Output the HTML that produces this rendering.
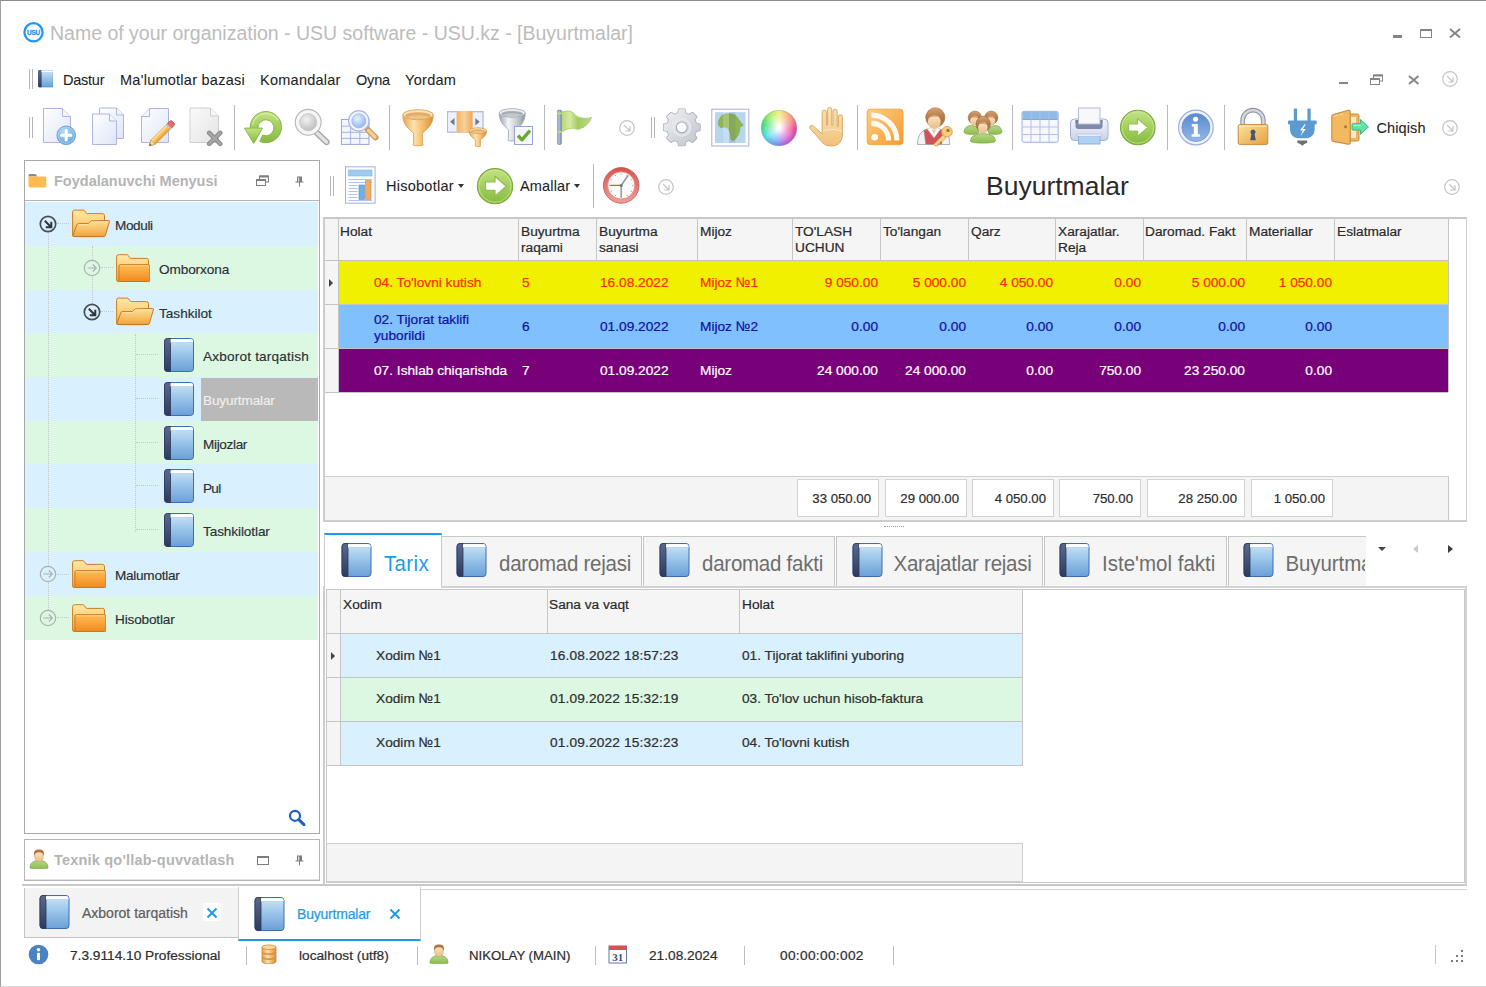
<!DOCTYPE html>
<html lang="uz">
<head>
<meta charset="utf-8">
<title>Buyurtmalar</title>
<style>
*{box-sizing:border-box;margin:0;padding:0}
html,body{width:1486px;height:987px;overflow:hidden;background:#fff}
body{position:relative;font-family:"Liberation Sans","DejaVu Sans",sans-serif;font-size:13px;color:#222}
.abs{position:absolute;left:0;top:0;width:1486px;height:987px}
.abs>*{position:absolute}
#win{position:absolute;left:0;top:0;width:1486px;height:987px;border-top:1px solid #8c8c8c;border-left:1px solid #a0a0a0;border-bottom:1px solid #d9d9d9}
.t{position:absolute;white-space:nowrap;line-height:1}
.g{-webkit-text-stroke:.22px currentColor}
.tr{-webkit-text-stroke:.16px currentColor}
.ui{-webkit-text-stroke:.08px currentColor}
.ui{font-size:14.5px;color:#1e1e1e}
.g{font-size:13.700px;color:#2e2e2e}
.h{line-height:16px;color:#2a2a2a}
.tab{font-size:20.500px;color:#6e6e6e;transform:scaleY(1.090);transform-origin:0 0}
.tr{font-size:13.600px;color:#2b2f36}
.vsep{position:absolute;width:1px;background:#b9b9b9}
.grip{position:absolute;width:4px;border-left:1px solid #b4b4b4;border-right:1px solid #b4b4b4}
</style>
</head>
<body>
<div id="win"></div>
<svg width="0" height="0" style="position:absolute">
<defs>
<!--GR-->
<linearGradient id="gPage" x1="0" y1="0" x2="1" y2="1"><stop offset="0" stop-color="#ffffff"/><stop offset="1" stop-color="#dfe5f6"/></linearGradient>
<linearGradient id="gPageG" x1="0" y1="0" x2="1" y2="1"><stop offset="0" stop-color="#fafafa"/><stop offset="1" stop-color="#e4e4e4"/></linearGradient>
<radialGradient id="gPlus" cx=".4" cy=".3" r=".8"><stop offset="0" stop-color="#b9dcf5"/><stop offset="1" stop-color="#5c9bd6"/></radialGradient>
<linearGradient id="gGreen" x1="0" y1="0" x2="0" y2="1"><stop offset="0" stop-color="#c3e286"/><stop offset=".5" stop-color="#a3cf5e"/><stop offset="1" stop-color="#86ba40"/></linearGradient>
<radialGradient id="gGlass" cx=".4" cy=".35" r=".7"><stop offset="0" stop-color="#f2f2f2"/><stop offset="1" stop-color="#bcbcbc"/></radialGradient>
<radialGradient id="gGlassB" cx=".4" cy=".35" r=".7"><stop offset="0" stop-color="#e8f1ff"/><stop offset="1" stop-color="#8fb5ee"/></radialGradient>
<linearGradient id="gGold" x1="0" y1="0" x2="1" y2="0"><stop offset="0" stop-color="#eaa24a"/><stop offset=".35" stop-color="#fde3ae"/><stop offset=".7" stop-color="#f2b763"/><stop offset="1" stop-color="#d98d3a"/></linearGradient>
<linearGradient id="gSilver" x1="0" y1="0" x2="1" y2="0"><stop offset="0" stop-color="#9aa1ab"/><stop offset=".35" stop-color="#f4f6f8"/><stop offset=".7" stop-color="#c5cad1"/><stop offset="1" stop-color="#8d949e"/></linearGradient>
<linearGradient id="gGear" x1="0" y1="0" x2="1" y2="1"><stop offset="0" stop-color="#f1f2f5"/><stop offset="1" stop-color="#bfc3cc"/></linearGradient>
<linearGradient id="gRss" x1="0" y1="0" x2="1" y2="1"><stop offset="0" stop-color="#fdcf86"/><stop offset="1" stop-color="#f59a2c"/></linearGradient>
<linearGradient id="gLock" x1="0" y1="0" x2="1" y2="1"><stop offset="0" stop-color="#fbe29a"/><stop offset="1" stop-color="#e5a244"/></linearGradient>
<linearGradient id="gInfo" x1="0" y1="0" x2="0" y2="1"><stop offset="0" stop-color="#5a89cf"/><stop offset="1" stop-color="#93b8e8"/></linearGradient>
<linearGradient id="gPrn" x1="0" y1="0" x2="0" y2="1"><stop offset="0" stop-color="#f4f6fb"/><stop offset="1" stop-color="#c9d2e8"/></linearGradient>
<linearGradient id="gHair" x1="0" y1="0" x2="0" y2="1"><stop offset="0" stop-color="#d7a273"/><stop offset=".45" stop-color="#b67c4c"/><stop offset="1" stop-color="#a56a3c"/></linearGradient>
<linearGradient id="gSkin" x1="0" y1="0" x2="0" y2="1"><stop offset="0" stop-color="#fbe6c8"/><stop offset="1" stop-color="#e9bd88"/></linearGradient>
<linearGradient id="gHand" x1="0" y1="0" x2="0" y2="1"><stop offset="0" stop-color="#fbe3b4"/><stop offset="1" stop-color="#f0c27c"/></linearGradient>
<linearGradient id="gBodyG" x1="0" y1="0" x2="0" y2="1"><stop offset="0" stop-color="#b6d983"/><stop offset="1" stop-color="#8cbc52"/></linearGradient>
<linearGradient id="gFlag" x1="0" y1="0" x2="1" y2="0"><stop offset="0" stop-color="#b4d873"/><stop offset=".28" stop-color="#d4eaa4"/><stop offset=".55" stop-color="#a2cb62"/><stop offset="1" stop-color="#bcdc86"/></linearGradient>
<linearGradient id="gCol" x1="0" y1="0" x2="1" y2="0"><stop offset="0" stop-color="#f2b463"/><stop offset=".5" stop-color="#f8d19a"/><stop offset="1" stop-color="#f0a850"/></linearGradient>
<!--/GR-->
  <linearGradient id="gBook" x1="0" y1="0" x2="0" y2="1"><stop offset="0" stop-color="#cfe6f7"/><stop offset=".45" stop-color="#9cc6ea"/><stop offset="1" stop-color="#6a9fd6"/></linearGradient>
  <linearGradient id="gSpine" x1="0" y1="0" x2="0" y2="1"><stop offset="0" stop-color="#5b6a8c"/><stop offset="1" stop-color="#2c3a5e"/></linearGradient>
  <linearGradient id="gFold" x1="0" y1="0" x2="0" y2="1"><stop offset="0" stop-color="#fdbb56"/><stop offset=".5" stop-color="#f9a43a"/><stop offset="1" stop-color="#f08a1c"/></linearGradient>
  <linearGradient id="gFoldBack" x1="0" y1="0" x2="0" y2="1"><stop offset="0" stop-color="#ffeaa8"/><stop offset=".5" stop-color="#fbcf78"/><stop offset="1" stop-color="#f3a640"/></linearGradient>
  <linearGradient id="gFoldO" x1="0" y1="0" x2="0" y2="1"><stop offset="0" stop-color="#fde09a"/><stop offset=".5" stop-color="#f8c46a"/><stop offset="1" stop-color="#efa440"/></linearGradient>
  <symbol id="book" viewBox="0 0 30 34">
    <rect x=".5" y=".5" width="29" height="33" rx="3" fill="url(#gBook)" stroke="#3f6db3"/>
    <path d="M3.5 .5h3v33h-3a3 3 0 0 1-3-3v-27a3 3 0 0 1 3-3z" fill="url(#gSpine)" stroke="#2b375a" stroke-width=".8"/>
    <path d="M6.5 1.2h20.5a2 2 0 0 1 2 2v.8h-22.5z" fill="#fff"/>
    <rect x="6.5" y="4" width="22.5" height="1" fill="#b9d6ee" opacity=".8"/>
  </symbol>
  <symbol id="fclosed" viewBox="0 0 34 28">
    <path d="M.6 2.700a2 2 0 0 1 2-2h8.200a2 2 0 0 1 1.600.9l1.400 2.100a1.500 1.500 0 0 0 1.200.7h15.500a2 2 0 0 1 2 2v19.600a1.500 1.500 0 0 1-1.500 1.500h-28.900a1.500 1.500 0 0 1-1.500-1.500z" fill="url(#gFoldBack)" stroke="#cf7d22" stroke-width="1"/>
    <path d="M2.900 12.200a1.500 1.500 0 0 1 1.500-1.500h28a1.500 1.500 0 0 1 1.500 1.500v13.900a1.500 1.500 0 0 1-1.500 1.500h-28a1.500 1.500 0 0 1-1.500-1.500z" fill="url(#gFold)" stroke="#cf7518" stroke-width="1"/>
    <path d="M4.200 11.800h28.400" stroke="#ffd58a" stroke-width="1"/>
  </symbol>
  <symbol id="fopen" viewBox="0 0 38 29">
    <path d="M.6 3.100a2 2 0 0 1 2-2h8.600a2 2 0 0 1 1.600.9l1.300 1.900a1.500 1.500 0 0 0 1.200.7h15.200a2 2 0 0 1 2 2v19.500a1.500 1.500 0 0 1-1.500 1.500h-28.900a1.500 1.500 0 0 1-1.500-1.500z" fill="url(#gFoldBack)" stroke="#cf7d22" stroke-width="1"/>
    <path d="M4.900 15.700a1.500 1.500 0 0 1 1.400-1.100h9.600a1.500 1.500 0 0 0 1-.4l1.900-1.900a1.500 1.500 0 0 1 1-.4l16.600-.5a1 1 0 0 1 1 1.300l-4 13.700a1.500 1.500 0 0 1-1.400 1.100h-30a1 1 0 0 1-1-1.300z" fill="url(#gFoldO)" stroke="#c97822" stroke-width="1"/>
    <path d="M6.500 15.700h9.800l2.600-2.500 16.500-.5" fill="none" stroke="#ffe7ae" stroke-width=".9"/>
  </symbol>
  <symbol id="cexp" viewBox="0 0 18 18">
    <circle cx="9" cy="9" r="7.700" stroke="#474e54" stroke-width="1.700"/>
    <path d="M5.800 5.800l5.700 5.700M12.300 6.800v5.500h-5.500" fill="none" stroke="#30373c" stroke-width="2"/>
  </symbol>
  <symbol id="ccol" viewBox="0 0 18 18">
    <circle cx="9" cy="9" r="7.700" stroke="#a9b2b0" stroke-width="1.200"/>
    <path d="M4.500 9h8.500M9.800 5.500l3.500 3.500-3.500 3.500" fill="none" stroke="#a9b2b0" stroke-width="1.200"/>
  </symbol>
</defs>
</svg>


<!-- TITLE BAR -->
<div id="title" class="abs">
<svg style="left:22px;top:21px" width="23" height="23" viewBox="0 0 23 23"><circle cx="11.500" cy="11.300" r="9.100" fill="#fff" stroke="#2196f3" stroke-width="2.300"/><text x="11.500" y="14" text-anchor="middle" font-family="Liberation Sans,DejaVu Sans,sans-serif" font-size="6.400" font-weight="bold" fill="#2196f3" stroke="#2196f3" stroke-width=".3" letter-spacing="-.1">USU</text></svg>
<span class="t" style="left:50px;top:24px;font-size:19.500px;color:#bcbcbc">Name of your organization - USU software - USU.kz - [Buyurtmalar]</span>
<div style="left:1393px;top:35px;width:9px;height:2.500px;background:#848484"></div>
<div style="left:1420px;top:29px;width:12px;height:9px;border:1px solid #848484;border-top-width:2px"></div>
<svg style="left:1449px;top:28px" width="12" height="10"><path d="M1 1l10 8.500M11 1l-10 8.500" stroke="#848484" stroke-width="1.900" fill="none"/></svg>
</div>

<!-- MENU BAR -->
<div id="menu" class="abs">
<span class="grip" style="left:29px;top:69px;height:20px"></span>
<svg style="left:37.500px;top:70px" width="15.500" height="17.500" viewBox="0 0 30 34" preserveAspectRatio="none"><use href="#book"/></svg>
<span class="t ui" style="left:63px;top:73px;letter-spacing:-0.25px">Dastur</span>
<span class="t ui" style="left:120px;top:73px;letter-spacing:0.25px">Ma'lumotlar bazasi</span>
<span class="t ui" style="left:260px;top:73px;letter-spacing:0.25px">Komandalar</span>
<span class="t ui" style="left:356px;top:73px;letter-spacing:-0.2px">Oyna</span>
<span class="t ui" style="left:405px;top:73px;letter-spacing:0.3px">Yordam</span>
<div style="left:1339px;top:81.500px;width:9px;height:2.500px;background:#848484"></div>
<svg style="left:1370px;top:74px" width="13" height="11"><rect x="3.500" y="1" width="9" height="6" fill="none" stroke="#848484"/><rect x="3.500" y=".5" width="9" height="2" fill="#848484"/><rect x=".5" y="4.500" width="9" height="6" fill="#fff" stroke="#848484"/><rect x=".5" y="4" width="9" height="2" fill="#848484"/></svg>
<svg style="left:1408px;top:75px" width="12" height="10"><path d="M1 1l9.500 8M10.500 1l-9.500 8" stroke="#848484" stroke-width="1.900" fill="none"/></svg>
<svg style="left:1441px;top:70px" width="18" height="18"><circle cx="9" cy="9" r="7.300" fill="#fff" stroke="#c4c4c4" stroke-width="1.200"/><path d="M6.200 6.200l5.300 5.300M12 7.300v4.700h-4.700" fill="none" stroke="#c4c4c4" stroke-width="1.200"/></svg>
</div>

<!-- TOOLBAR -->
<div id="toolbar" class="abs">
<span class="grip" style="left:29px;top:117px;height:21px"></span>
<svg style="left:39px;top:107px" width="40" height="40" viewBox="0 0 40 40"><path d="M4.5 1.5H23.5L31.5 9.5V35.5H4.5Z" fill="url(#gPage)" stroke="#adb4df"/><path d="M23.5 1.5V9.5H31.5" fill="#f4f6fc" stroke="#adb4df"/><circle cx="27.200" cy="28.300" r="9.300" fill="url(#gPlus)" stroke="#6aa3d9"/><circle cx="27.200" cy="28.300" r="8" fill="none" stroke="#b5d8f3" stroke-width="1" opacity=".7"/><path d="M27.200 23.600v9.400M22.500 28.300h9.400" stroke="#fff" stroke-width="3" stroke-linecap="round"/></svg>
<svg style="left:88px;top:107px" width="40" height="40" viewBox="0 0 40 40"><path d="M11.5 1H28.5L35.5 8V31.5H11.5Z" fill="url(#gPage)" stroke="#adb4df"/><path d="M28.5 1V8H35.5" fill="#f4f6fc" stroke="#adb4df"/><path d="M4.5 7H21.5L28.5 14V37.5H4.5Z" fill="url(#gPage)" stroke="#adb4df"/><path d="M21.5 7V14H28.5" fill="#f4f6fc" stroke="#adb4df"/></svg>
<svg style="left:138px;top:107px" width="40" height="40" viewBox="0 0 40 40"><path d="M11.5 1.5H30.5V35.5H3.5V9.5Z" fill="url(#gPage)" stroke="#adb4df"/><path d="M11.5 1.5V9.5H3.5" fill="#f4f6fc" stroke="#adb4df"/><g transform="translate(11.400 38.800) rotate(-45)"><path d="M0 0l5-3h26.500a2 2 0 0 1 2 2v2a2 2 0 0 1-2 2h-26.500z" fill="#f7c35c" stroke="#c98c36" stroke-width=".8"/><path d="M5-3h22v2h-22z" fill="#fbdc94"/><path d="M5 1h22v2h-22z" fill="#e9a443"/><path d="M28-3h3.500a2 2 0 0 1 2 2v2a2 2 0 0 1-2 2h-3.500z" fill="#e56e70" stroke="#c4484c" stroke-width=".6"/><path d="M26-3h2.200v6h-2.200z" fill="#b9c3d6"/><path d="M0 0l5-3v6z" fill="#f3dcb8" stroke="#c98c36" stroke-width=".5"/><path d="M0 0l2-1.200v2.400z" fill="#555"/></g></svg>
<svg style="left:187px;top:107px" width="40" height="40" viewBox="0 0 40 40"><path d="M3 1H23.5L31.5 9V35.5H3Z" fill="url(#gPageG)" stroke="#cfcfcf"/><path d="M23.5 1V9H31.5" fill="#f4f6fc" stroke="#cfcfcf"/><path d="M22.200 25.900l11 11M33.200 25.900l-11 11" stroke="#8e8e8e" stroke-width="4.600" stroke-linecap="round"/><path d="M22.200 25.900l11 11M33.200 25.900l-11 11" stroke="#a6a6a6" stroke-width="2.200" stroke-linecap="round"/></svg>
<svg style="left:242.6px;top:107px" width="40" height="40" viewBox="0 0 40 40"><path d="M7.300 21.100A15.600 15.600 0 1 1 16.800 34.450L19.700 28.100A8 8 0 1 0 14.900 21.100Z" fill="url(#gGreen)" stroke="#7db040" stroke-width=".9" stroke-linejoin="round"/><path d="M9.500 18A14 14 0 0 1 35 13" fill="none" stroke="#d9efb0" stroke-width="1.400" opacity=".8"/><path d="M1.500 21.100L19.500 21.100L10.700 36.400Z" fill="url(#gGreen)" stroke="#7db040" stroke-width=".9" stroke-linejoin="round"/><path d="M7.800 20.600h6.600v1.200h-6.600z" fill="#a9d365"/></svg>
<svg style="left:291.5px;top:107px" width="40" height="40" viewBox="0 0 40 40"><path d="M25 26l9.500 9" stroke="#a3a3a3" stroke-width="6.200" stroke-linecap="round"/><path d="M25 26l9.500 9" stroke="#e2e2e2" stroke-width="3.600" stroke-linecap="round"/><circle cx="16.200" cy="15.200" r="12.900" fill="#f6f6f6" stroke="#b9b9b9" stroke-width="1.200"/><circle cx="16.200" cy="15.200" r="8.600" fill="url(#gGlass)" stroke="#c6c6c6" stroke-width=".8"/></svg>
<svg style="left:340px;top:107px" width="40" height="40" viewBox="0 0 40 40"><rect x="1.500" y="12.500" width="27.500" height="24.900" fill="#f4f6fd" stroke="#98a4da"/><path d="M1.500 19.2h27.500" stroke="#a9b3e0" stroke-width="1"/><path d="M1.500 25.3h27.500" stroke="#a9b3e0" stroke-width="1"/><path d="M1.500 31.4h27.500" stroke="#a9b3e0" stroke-width="1"/><path d="M10.6 12.500v24.900" stroke="#a9b3e0" stroke-width="1"/><path d="M19.8 12.500v24.900" stroke="#a9b3e0" stroke-width="1"/><path d="M28 23l7.500 7.500" stroke="#d29a55" stroke-width="6" stroke-linecap="round"/><path d="M28.500 23.500l6.500 6.500" stroke="#f6cf98" stroke-width="3.200" stroke-linecap="round"/><circle cx="18.800" cy="13.900" r="10.200" fill="#f0f3fc" stroke="#a9b5e6" stroke-width="1.200"/><circle cx="18.800" cy="13.900" r="7" fill="url(#gGlassB)" stroke="#9db4ea" stroke-width=".8"/></svg>
<svg style="left:397.6px;top:107px" width="40" height="40" viewBox="0 0 40 40"><path d="M4.80 7.72C4.80 19.23 12.35 22.64 15.59 26.28V36.28l-0.81 1.22a5.22 1.32 0 0 0 10.44 0l-0.81 -1.22V26.28C27.65 22.64 35.20 19.23 35.20 7.72Z" fill="url(#gGold)" stroke="#d9994a" stroke-width=".8"/><ellipse cx="20" cy="7.72" rx="15.20" ry="5.02" fill="#fbe3b6" stroke="#d9994a" stroke-width=".8"/><ellipse cx="20" cy="8.63" rx="12.77" ry="3.31" fill="#d99a52" opacity=".75"/><ellipse cx="20" cy="9.95" rx="10.03" ry="1.81" fill="#f3c98a" opacity=".8"/></svg>
<svg style="left:446.7px;top:107px" width="40" height="40" viewBox="0 0 40 40"><rect x=".4" y="4.700" width="35.600" height="20.400" fill="#eef1fa" stroke="#b0b8e4" stroke-width="1.300"/><rect x="9.600" y="4.100" width="16" height="21.600" fill="url(#gCol)"/><path d="M7.500 11v7.400l-4.400-3.700z" fill="#6f7b8f"/><path d="M28.300 11v7.400l4.400-3.700z" fill="#6f7b8f"/><path d="M22.30 23.64C22.30 29.44 26.57 30.93 28.41 32.99V38.08l-0.46 0.69a2.95 0.75 0 0 0 5.91 0l-0.46 -0.69V32.99C35.23 30.93 39.50 29.44 39.50 23.64Z" fill="url(#gGold)" stroke="#d9994a" stroke-width=".8"/><ellipse cx="30.9" cy="23.64" rx="8.60" ry="2.84" fill="#fbe3b6" stroke="#d9994a" stroke-width=".8"/><ellipse cx="30.9" cy="24.15" rx="7.22" ry="1.87" fill="#d99a52" opacity=".75"/><ellipse cx="30.9" cy="24.90" rx="5.68" ry="1.02" fill="#f3c98a" opacity=".8"/></svg>
<svg style="left:496px;top:107px" width="40" height="40" viewBox="0 0 40 40"><path d="M3.20 5.99C3.20 16.42 9.66 19.68 12.43 22.80V31.81l-0.69 1.04a4.46 1.13 0 0 0 8.93 0l-0.69 -1.04V22.80C22.74 19.68 29.20 16.42 29.20 5.99Z" fill="url(#gSilver)" stroke="#9aa1ad" stroke-width=".8"/><ellipse cx="16.2" cy="5.99" rx="13.00" ry="4.29" fill="#eef0f3" stroke="#9aa1ad" stroke-width=".8"/><ellipse cx="16.2" cy="6.77" rx="10.92" ry="2.83" fill="#8d95a1" opacity=".75"/><ellipse cx="16.2" cy="7.90" rx="8.58" ry="1.54" fill="#c9ced6" opacity=".8"/><rect x="18.500" y="19.500" width="18" height="18" fill="#f3f5fc" stroke="#98a4d8"/><rect x="20" y="21" width="15" height="15" fill="none" stroke="#fff"/><path d="M22 28.500l4 4.300l8-9.300" fill="none" stroke="#6aa82e" stroke-width="3.400" stroke-linejoin="round"/></svg>
<svg style="left:555px;top:107px" width="40" height="40" viewBox="0 0 40 40"><path d="M6.400 5C10 4 13 3.800 15.400 4.300C19 5.200 20 8.500 22.200 9.600C25 11.200 31 12 36.600 10.400C35.500 13 34.500 14.800 32.900 16.500C31 18.800 28.500 20.800 26.100 21.300C24.500 22 23.500 22.500 22.200 22.300C20.500 22 19.800 21.300 18.300 21.300C16 21.200 14 21.600 12 22.300C10 23 8 24 6.400 25Z" fill="url(#gFlag)" stroke="#9cc760" stroke-width=".7"/><rect x="2.600" y="3.100" width="3.800" height="34.300" rx=".8" fill="#8a9ec6" stroke="#6f82aa" stroke-width=".6"/><rect x="3.500" y="3.600" width="1.100" height="33.300" fill="#bccae6"/><rect x="2.300" y="5.400" width="4.400" height="1.900" fill="#c3de6e"/><rect x="2.300" y="23.900" width="4.400" height="1.900" fill="#c3de6e"/></svg>
<svg style="left:661.5px;top:107px" width="40" height="40" viewBox="0 0 40 40"><path d="M16.98 2.62L22.62 2.62L23.21 6.20L27.43 7.95L30.38 5.84L34.36 9.82L32.25 12.77L34.00 16.99L37.58 17.58L37.58 23.22L34.00 23.81L32.25 28.03L34.36 30.98L30.38 34.96L27.43 32.85L23.21 34.60L22.62 38.18L16.98 38.18L16.39 34.60L12.17 32.85L9.22 34.96L5.24 30.98L7.35 28.03L5.60 23.81L2.02 23.22L2.02 17.58L5.60 16.99L7.35 12.77L5.24 9.82L9.22 5.84L12.17 7.95L16.39 6.20Z" fill="url(#gGear)" stroke="#a7acb8" stroke-width="2.200" stroke-linejoin="round"/><path d="M16.98 2.62L22.62 2.62L23.21 6.20L27.43 7.95L30.38 5.84L34.36 9.82L32.25 12.77L34.00 16.99L37.58 17.58L37.58 23.22L34.00 23.81L32.25 28.03L34.36 30.98L30.38 34.96L27.43 32.85L23.21 34.60L22.62 38.18L16.98 38.18L16.39 34.60L12.17 32.85L9.22 34.96L5.24 30.98L7.35 28.03L5.60 23.81L2.02 23.22L2.02 17.58L5.60 16.99L7.35 12.77L5.24 9.82L9.22 5.84L12.17 7.95L16.39 6.20Z" fill="url(#gGear)" stroke="url(#gGear)" stroke-width=".8" stroke-linejoin="round"/><circle cx="19.8" cy="20.4" r="8.4" fill="none" stroke="#e6e8ed" stroke-width="2"/><circle cx="19.8" cy="20.4" r="5.4" fill="#fff" stroke="#a7acb8" stroke-width="1.100"/></svg>
<svg style="left:710px;top:107px" width="40" height="40" viewBox="0 0 40 40"><rect x="1.800" y="2.200" width="37" height="36.800" fill="#fff" stroke="#a5acdb"/><rect x="5" y="5.200" width="30.500" height="30.800" fill="#b7d5ef"/><path d="M9.600 11.800C11 9 13 7.500 15 7.100C18 6.500 22 7 24.400 7.800C26 8.500 27 10 27.800 11.200L31.100 15.900L33.200 17.900C32.500 19.200 31 19.800 29.800 19.900C30 22 29.600 24 29.100 25.300C28.500 27.500 27.500 29.500 26.400 30.700C25.500 32.200 24.300 33.200 23.100 33.400C22 33.300 21.300 32.700 21 32C20.600 30 20.600 28.500 20.400 26.600C20 24.800 19.300 23.200 18.400 21.900C17.500 20.800 16.300 20.100 15 19.900C13.500 20 12 20.500 10.900 20.600C9.700 19.800 8.800 18.500 8.300 17.200C8.300 15 8.800 13.200 9.600 11.800Z" fill="#8fb450" stroke="#7fa446" stroke-width=".6"/><rect x="13" y="5.200" width="6" height="30.800" fill="#fff" opacity=".22"/><rect x="19" y="5.200" width="6.500" height="30.800" fill="#4f6f98" opacity=".16"/></svg>
<div style="left:761.0px;top:110px;width:35.600px;height:35.600px;border-radius:50%;background:radial-gradient(circle at 50% 50%,#fff 0,rgba(255,255,255,.9) 10%,rgba(255,255,255,.55) 30%,rgba(255,255,255,0) 66%),conic-gradient(from 0deg,#f4ee7a,#f9a878 40deg,#ee3f8e 95deg,#c85ae0 150deg,#6f9ff4 190deg,#4fe0ec 235deg,#45dd70 285deg,#aef06a 330deg,#f4ee7a);box-shadow:inset 0 0 0 1px rgba(160,160,190,.35), inset 0 -2px 4px rgba(90,90,140,.18)"></div>
<svg style="left:806px;top:107px" width="40" height="40" viewBox="0 0 40 40"><path d="M16.200 21V5.200a2.100 2.100 0 0 1 4.200 0V18h1.200V2.600a2.100 2.100 0 0 1 4.200 0V18h1.200V4.300a2.100 2.100 0 0 1 4.200 0V19h1.200V9.800a2 2 0 0 1 4 0V27c0 7-3.500 12-11 12c-6 0-9-2.500-12-7L4 21.500c-1.300-2 1.200-4.200 3.200-2.600l9 8z" fill="url(#gHand)" stroke="#d6a45c" stroke-width=".9" stroke-linejoin="round"/><path d="M17 24c4-2 12-2 19 0" fill="none" stroke="#fff3d8" stroke-width="1.200" opacity=".7"/></svg>
<svg style="left:864.6px;top:107px" width="40" height="40" viewBox="0 0 40 40"><rect x="2.200" y="2.200" width="35.800" height="35.400" rx="3" fill="url(#gRss)" stroke="#f3a545"/><circle cx="9.700" cy="30.200" r="3.300" fill="#fff"/><path d="M6.500 19a14 14 0 0 1 14.500 14.500h5.200A19.500 19.500 0 0 0 6.500 13.800z" fill="#fff" opacity=".95"/><path d="M6.500 9.500a24 24 0 0 1 24.500 24h-4A20.500 20.500 0 0 0 6.500 13z" fill="#fbd9a6" opacity=".0"/><path d="M6.500 5.500a28 28 0 0 1 28 28h-5.200A22.800 22.800 0 0 0 6.500 10.700z" fill="#fff" opacity=".92"/></svg>
<svg style="left:915px;top:107px" width="40" height="40" viewBox="0 0 40 40"><path d="M2.700 37.500c0-9 3.500-13.500 9.500-15.500h13c6 2 9.500 6.500 9.500 15.500z" fill="#cc545a" stroke="#9a9a9a" stroke-width=".8"/><path d="M2.700 37.500c0-7 2.200-11.500 6.200-13.800l1.800 13.800zM34.700 37.500c0-7-2.200-11.500-6.200-13.800l-1.800 13.800z" fill="#f4f4f4" stroke="#a2a2a2" stroke-width=".5"/><path d="M12.500 22.300l6.500 8.500 6.500-8.500-3-1.500h-7z" fill="#fff" stroke="#c4c4c4" stroke-width=".4"/><path d="M16.500 22.500l2.500 4 2.500-4z" fill="#e9c9a0"/><ellipse cx="20.300" cy="10.500" rx="9.600" ry="9.800" fill="url(#gHair)" stroke="#9a6238" stroke-width=".5"/><ellipse cx="19.300" cy="14.900" rx="6.400" ry="7.200" fill="url(#gSkin)"/><path d="M13 11.500C15 6.500 21 6 26.500 11C23 9 17 9 13 11.500Z" fill="#c89060" opacity=".9"/><g><circle cx="32" cy="24.700" r="5.300" fill="#f7cd80" stroke="#d9a04e" stroke-width=".9"/><circle cx="33" cy="23.400" r="1.700" fill="#a8703e"/><path d="M28.400 27.800l-9.800 9.600 1.300 1.500h2.900v-2.200h2.200v-2.200h2.300l3.400-3.400z" fill="#f7cd80" stroke="#d9a04e" stroke-width=".8"/><path d="M20.500 38l8.300-8.300" stroke="#fdebb8" stroke-width="1" opacity=".8"/></g></svg>
<svg style="left:962.7px;top:107px" width="40" height="40" viewBox="0 0 40 40"><path d="M1.10 25.30C1.10 21.21 3.76 18.60 8.50 18.60S15.90 21.21 15.90 25.30C15.90 28.10 1.10 28.10 1.10 25.30Z" fill="url(#gBodyG)" stroke="#78a444" stroke-width=".7"/><ellipse cx="11.90" cy="10.72" rx="6.70" ry="6.62" fill="url(#gHair)" stroke="#9a6238" stroke-width=".5"/><ellipse cx="11.56" cy="13.75" rx="4.42" ry="4.90" fill="url(#gSkin)"/><path d="M7.08 11.66C8.55 8.06 12.57 7.70 16.05 12.02C13.91 10.22 9.89 9.86 7.08 11.66Z" fill="#c89060" opacity=".9"/><path d="M25.30 25.30C25.30 21.21 27.73 18.60 32.05 18.60S38.80 21.21 38.80 25.30C38.80 28.10 25.30 28.10 25.30 25.30Z" fill="url(#gBodyG)" stroke="#78a444" stroke-width=".7"/><ellipse cx="28.20" cy="10.72" rx="6.70" ry="6.62" fill="url(#gHair)" stroke="#9a6238" stroke-width=".5"/><ellipse cx="27.86" cy="13.75" rx="4.42" ry="4.90" fill="url(#gSkin)"/><path d="M23.38 11.66C24.85 8.06 28.87 7.70 32.35 12.02C30.21 10.22 26.19 9.86 23.38 11.66Z" fill="#c89060" opacity=".9"/><path d="M7.50 34.00C7.50 29.42 11.98 26.60 19.95 26.60S32.40 29.42 32.40 34.00C32.40 36.80 7.50 36.80 7.50 34.00Z" fill="url(#gBodyG)" stroke="#78a444" stroke-width=".7"/><ellipse cx="20.20" cy="17.10" rx="7.20" ry="8.00" fill="url(#gHair)" stroke="#9a6238" stroke-width=".5"/><ellipse cx="19.84" cy="20.76" rx="4.75" ry="5.92" fill="url(#gSkin)"/><path d="M15.02 18.23C16.60 13.89 20.92 13.45 24.66 18.67C22.36 16.50 18.04 16.06 15.02 18.23Z" fill="#c89060" opacity=".9"/></svg>
<svg style="left:1019.6px;top:107px" width="40" height="40" viewBox="0 0 40 40"><rect x="2" y="4.300" width="36.200" height="31" rx="2" fill="#f6f8fd" stroke="#9fb0e0"/><path d="M2.500 6.300a1.500 1.500 0 0 1 1.500-1.500h32.200a1.500 1.500 0 0 1 1.500 1.500v6.200h-35.200z" fill="#8fbbe8"/><path d="M2.500 20h35" stroke="#b3c0e6" stroke-width="1"/><path d="M2.500 27.5h35" stroke="#b3c0e6" stroke-width="1"/><path d="M11 4.800v30" stroke="#b3c0e6" stroke-width="1"/><path d="M20 4.800v30" stroke="#b3c0e6" stroke-width="1"/><path d="M29 4.800v30" stroke="#b3c0e6" stroke-width="1"/><path d="M2.500 12.500h35.200" stroke="#86a6dc" stroke-width="1"/></svg>
<svg style="left:1069px;top:107px" width="40" height="40" viewBox="0 0 40 40"><rect x="1.500" y="12" width="37.500" height="21.500" rx="4" fill="url(#gPrn)" stroke="#a3aed4"/><path d="M6.500 13h27v6a3 3 0 0 1-3 3h-21a3 3 0 0 1-3-3z" fill="#7f89a8"/><path d="M6.500 13h27v3h-27z" fill="#6a7596" opacity=".6"/><rect x="9.500" y="1" width="21.500" height="16" fill="#f7f8fc" stroke="#b5bcd8"/><rect x="9.500" y="28.500" width="21.500" height="8.500" fill="#aed3f2" stroke="#8fb0dc"/><rect x="8" y="27" width="24.500" height="2.200" fill="#e9edf7" stroke="#a9b3d6" stroke-width=".5"/></svg>
<svg style="left:1118px;top:107px" width="40" height="40" viewBox="0 0 40 40"><circle cx="19.800" cy="20.500" r="17.300" fill="url(#gGreen)" stroke="#7aa93a" stroke-width="1.100"/><circle cx="19.800" cy="20.500" r="15.800" fill="none" stroke="#cfe89a" stroke-width="1" opacity=".7"/><path d="M10.500 16.800h9v-5.200l10.500 8.900l-10.500 8.900v-5.200h-9z" fill="#fff" stroke="#95c455" stroke-width="1.300" stroke-linejoin="round"/></svg>
<svg style="left:1175.5px;top:107px" width="40" height="40" viewBox="0 0 40 40"><circle cx="19.900" cy="20.500" r="17.300" fill="#eef2fb" stroke="#9db1de" stroke-width="1.200"/><circle cx="19.900" cy="20.500" r="14" fill="url(#gInfo)" stroke="#6d92cf" stroke-width=".8"/><circle cx="19.600" cy="12.300" r="2.500" fill="#fff"/><path d="M15.800 17h6v10.200h2v2.600h-8.200v-2.600h2.200v-7.600h-2z" fill="#fff"/></svg>
<svg style="left:1233px;top:107px" width="40" height="40" viewBox="0 0 40 40"><path d="M9.600 19V13.500a10.400 10.400 0 0 1 20.800 0V19" fill="none" stroke="#8d939e" stroke-width="4.600"/><path d="M9.600 19V13.500a10.400 10.400 0 0 1 20.800 0V19" fill="none" stroke="#d5d9df" stroke-width="2.400"/><rect x="5.200" y="17.600" width="29.600" height="19.800" rx="1.500" fill="url(#gLock)" stroke="#c98a40"/><rect x="6.200" y="18.600" width="27.600" height="1.200" fill="#fdf0c4" opacity=".8"/><path d="M20 22.500a2.600 2.600 0 0 1 1.600 4.600l1.200 6.200h-5.600l1.200-6.200a2.600 2.600 0 0 1 1.600-4.600z" fill="#4c566a"/></svg>
<svg style="left:1281.6px;top:107px" width="40" height="40" viewBox="0 0 40 40"><rect x="11.800" y="1.600" width="3.300" height="13" rx="1" fill="#5b9bd1"/><rect x="25.400" y="1.600" width="3.300" height="13" rx="1" fill="#5b9bd1"/><path d="M6 14.500a1 1 0 0 1 1-1h26.700a1 1 0 0 1 1 1v2a1 1 0 0 1-1 1h-1v4.500c0 6-4 9.200-8 9.200h-8.700c-4 0-8-3.200-8-9.200V17.500h-1a1 1 0 0 1-1-1z" fill="#5b9bd1"/><path d="M22.600 17.200l-4.600 6.200h2.800l-2.400 5.800l5.400-7.200h-2.900l2.900-4.800z" fill="#fff"/><path d="M15.300 33.400h9.900v2.400l-2.800 1.200l-2.100 1.800l-2.100-1.800l-2.900-1.200z" fill="#6b7079"/></svg>
<svg style="left:1330px;top:107px" width="40" height="40" viewBox="0 0 40 40"><path d="M18 7h9.500a1.500 1.500 0 0 1 1.500 1.500v24a1.500 1.500 0 0 1-1.500 1.500h-9.500z" fill="#f0b65e" stroke="#c48d3e" stroke-width="1"/><rect x="20.500" y="9.500" width="6" height="22" fill="#fbe9c8" stroke="#d7a85e" stroke-width=".6"/><path d="M3.300 7.500l15-4.300a1.500 1.500 0 0 1 1.900 1.500v31a1.500 1.500 0 0 1-1.900 1.500l-15-2.800a2 2 0 0 1-1.500-2v-23a2 2 0 0 1 1.500-1.900z" fill="#f2b961" stroke="#c48d3e" stroke-width="1.100" stroke-linejoin="round"/><circle cx="15.500" cy="19.800" r="1.500" fill="#a8783a"/><path d="M5 9.200l3-.8M10 7.800l3-.8" stroke="#fbe3b0" stroke-width="1" stroke-linecap="round"/><path d="M23 16.700h7.500v-4.200l8 7.400l-8 7.400v-4.200h-7.500a1 1 0 0 1-1-1v-4.400a1 1 0 0 1 1-1z" fill="#62e3a4" stroke="#3cb87c" stroke-width="1" stroke-linejoin="round"/><path d="M24 18.300h7" stroke="#c9f7df" stroke-width="1.200" stroke-linecap="round" stroke-dasharray="2.500 1.200"/></svg>
<div class="vsep" style="left:234px;top:105px;height:45px"></div>
<div class="vsep" style="left:389px;top:105px;height:45px"></div>
<div class="vsep" style="left:544px;top:105px;height:45px"></div>
<div class="vsep" style="left:857px;top:105px;height:45px"></div>
<div class="vsep" style="left:1012px;top:105px;height:45px"></div>
<div class="vsep" style="left:1167px;top:105px;height:45px"></div>
<div class="vsep" style="left:1224px;top:105px;height:45px"></div>
<svg style="left:618px;top:119px" width="18" height="18"><circle cx="9" cy="9" r="7.300" fill="#fff" stroke="#c4c4c4" stroke-width="1.200"/><path d="M6.200 6.200l5.300 5.300M12 7.300v4.700h-4.700" fill="none" stroke="#c4c4c4" stroke-width="1.200"/></svg>
<svg style="left:1441px;top:119px" width="18" height="18"><circle cx="9" cy="9" r="7.300" fill="#fff" stroke="#c4c4c4" stroke-width="1.200"/><path d="M6.200 6.200l5.300 5.300M12 7.300v4.700h-4.700" fill="none" stroke="#c4c4c4" stroke-width="1.200"/></svg>
<span class="grip" style="left:651px;top:117px;height:21px"></span>
<span class="t ui" style="left:1376.500px;top:120.500px;letter-spacing:.1px">Chiqish</span>
</div>

<!-- LEFT PANEL -->
<div id="left" class="abs">
<div style="left:24px;top:160px;width:296px;height:674px;border:1px solid #a8a8a8;background:#fff"></div>
<div style="left:25px;top:200px;width:294px;height:1px;background:#b5b5b5"></div>
<div style="left:25px;top:202px;width:293px;height:44px;background:#d9f0ff"></div>
<div style="left:25px;top:246px;width:293px;height:44px;background:#dcf8e3"></div>
<div style="left:25px;top:290px;width:293px;height:43px;background:#d9f0ff"></div>
<div style="left:25px;top:333px;width:293px;height:44px;background:#dcf8e3"></div>
<div style="left:25px;top:377px;width:293px;height:44px;background:#d9f0ff"></div>
<div style="left:25px;top:421px;width:293px;height:43px;background:#dcf8e3"></div>
<div style="left:25px;top:464px;width:293px;height:44px;background:#d9f0ff"></div>
<div style="left:25px;top:508px;width:293px;height:44px;background:#dcf8e3"></div>
<div style="left:25px;top:552px;width:293px;height:44px;background:#d9f0ff"></div>
<div style="left:25px;top:596px;width:293px;height:44px;background:#dcf8e3"></div>
<div style="left:48px;top:233px;width:0;height:377px;border-left:1px dotted #c2c7c7"></div>
<div style="left:92px;top:246px;width:0;height:58px;border-left:1px dotted #c2c7c7"></div>
<div style="left:135px;top:334px;width:0;height:198px;border-left:1px dotted #c2c7c7"></div>
<div style="left:57px;top:223px;width:12px;height:0;border-top:1px dotted #c2c7c7"></div>
<div style="left:101px;top:267px;width:12px;height:0;border-top:1px dotted #c2c7c7"></div>
<div style="left:101px;top:311px;width:12px;height:0;border-top:1px dotted #c2c7c7"></div>
<div style="left:57px;top:574px;width:12px;height:0;border-top:1px dotted #c2c7c7"></div>
<div style="left:57px;top:617px;width:12px;height:0;border-top:1px dotted #c2c7c7"></div>
<div style="left:136px;top:354px;width:22px;height:0;border-top:1px dotted #c2c7c7"></div>
<div style="left:136px;top:398px;width:22px;height:0;border-top:1px dotted #c2c7c7"></div>
<div style="left:136px;top:442px;width:22px;height:0;border-top:1px dotted #c2c7c7"></div>
<div style="left:136px;top:485px;width:22px;height:0;border-top:1px dotted #c2c7c7"></div>
<div style="left:136px;top:529px;width:22px;height:0;border-top:1px dotted #c2c7c7"></div>
<div style="left:201px;top:378px;width:117px;height:43px;background:#b9b9b9"></div>
<svg style="left:39px;top:215px;fill:#d9f0ff" width="18" height="18"><use href="#cexp"/></svg>
<svg style="left:72px;top:209px" width="38" height="29"><use href="#fopen"/></svg>
<svg style="left:83px;top:259px;fill:#dcf8e3" width="18" height="18"><use href="#ccol"/></svg>
<svg style="left:116px;top:253.500px" width="34" height="28"><use href="#fclosed"/></svg>
<svg style="left:83px;top:303px;fill:#d9f0ff" width="18" height="18"><use href="#cexp"/></svg>
<svg style="left:116px;top:297px" width="38" height="29"><use href="#fopen"/></svg>
<svg style="left:164px;top:338px" width="30" height="34"><use href="#book"/></svg>
<svg style="left:164px;top:382px" width="30" height="34"><use href="#book"/></svg>
<svg style="left:164px;top:426px" width="30" height="34"><use href="#book"/></svg>
<svg style="left:164px;top:469px" width="30" height="34"><use href="#book"/></svg>
<svg style="left:164px;top:513px" width="30" height="34"><use href="#book"/></svg>
<svg style="left:39px;top:565px;fill:#d9f0ff" width="18" height="18"><use href="#ccol"/></svg>
<svg style="left:72px;top:560px" width="34" height="28"><use href="#fclosed"/></svg>
<svg style="left:39px;top:609px;fill:#dcf8e3" width="18" height="18"><use href="#ccol"/></svg>
<svg style="left:72px;top:604px" width="34" height="28"><use href="#fclosed"/></svg>
<span class="t tr" style="left:115px;top:219px;letter-spacing:-0.4px;">Moduli</span>
<span class="t tr" style="left:159px;top:263px;letter-spacing:-0.1px;">Omborxona</span>
<span class="t tr" style="left:159px;top:307px;letter-spacing:0px;">Tashkilot</span>
<span class="t tr" style="left:203px;top:350px;letter-spacing:0.19px;">Axborot tarqatish</span>
<span class="t tr" style="left:203px;top:394px;color:#f3efe9;letter-spacing:-0.14px;">Buyurtmalar</span>
<span class="t tr" style="left:203px;top:438px;letter-spacing:-0.35px;">Mijozlar</span>
<span class="t tr" style="left:203px;top:482px;letter-spacing:-0.7px;">Pul</span>
<span class="t tr" style="left:203px;top:525px;letter-spacing:-0.1px;">Tashkilotlar</span>
<span class="t tr" style="left:115px;top:569px;letter-spacing:-0.28px;">Malumotlar</span>
<span class="t tr" style="left:115px;top:613px;letter-spacing:-0.16px;">Hisobotlar</span>
<span class="t" style="left:54px;top:174px;font-size:14.500px;font-weight:bold;color:#b4b4b4">Foydalanuvchi Menyusi</span>
<div style="left:24px;top:839px;width:296px;height:42px;border:1px solid #b6b6b6;background:#fff;box-shadow:inset 0 -1px 0 #e2e2e2"></div>
<span class="t" style="left:54px;top:853px;font-size:14.500px;font-weight:bold;color:#b4b4b4;letter-spacing:.2px">Texnik qo'llab-quvvatlash</span>
</div>

<!-- MAIN -->
<div id="main" class="abs">
<span class="grip" style="left:330px;top:176px;height:20px"></span>
<span class="t ui" style="left:386px;top:179px;letter-spacing:.25px">Hisobotlar</span>
<span class="t ui" style="left:520px;top:179px;letter-spacing:.15px">Amallar</span>
<div class="vsep" style="left:593px;top:164px;height:44px"></div>
<span class="t " style="left:986px;top:173px;font-size:26.500px;color:#2a2a2a">Buyurtmalar</span>
<div style="left:323px;top:217px;width:1144px;height:305px;border:2px solid #cdcdcd;border-top-color:#c8c8c8;border-right:1px solid #d0d0d0;background:#fff"></div>
<div style="left:325px;top:219px;width:1123px;height:42px;background:#f5f5f5;border-bottom:1px solid #c2c2c2"></div>
<div style="left:338px;top:219px;width:1px;height:42px;background:#c6c6c6"></div>
<div style="left:518px;top:219px;width:1px;height:42px;background:#c6c6c6"></div>
<div style="left:596px;top:219px;width:1px;height:42px;background:#c6c6c6"></div>
<div style="left:697px;top:219px;width:1px;height:42px;background:#c6c6c6"></div>
<div style="left:792px;top:219px;width:1px;height:42px;background:#c6c6c6"></div>
<div style="left:880px;top:219px;width:1px;height:42px;background:#c6c6c6"></div>
<div style="left:968px;top:219px;width:1px;height:42px;background:#c6c6c6"></div>
<div style="left:1055px;top:219px;width:1px;height:42px;background:#c6c6c6"></div>
<div style="left:1143px;top:219px;width:1px;height:42px;background:#c6c6c6"></div>
<div style="left:1246px;top:219px;width:1px;height:42px;background:#c6c6c6"></div>
<div style="left:1334px;top:219px;width:1px;height:42px;background:#c6c6c6"></div>
<div style="left:1448px;top:219px;width:1px;height:42px;background:#c6c6c6"></div>
<div style="left:325px;top:261px;width:13px;height:131px;background:#f5f5f5"></div>
<div style="left:325px;top:304px;width:1123px;height:1px;background:#c4c4c4"></div>
<div style="left:325px;top:348px;width:1123px;height:1px;background:#c4c4c4"></div>
<div style="left:325px;top:392px;width:1123px;height:1px;background:#c4c4c4"></div>
<div style="left:338px;top:261px;width:1px;height:131px;background:#c4c4c4"></div>
<div style="left:339px;top:261px;width:1109px;height:43px;background:#f0f000"></div>
<div style="left:339px;top:305px;width:1109px;height:43px;background:#80c0ff"></div>
<div style="left:339px;top:349px;width:1109px;height:43px;background:#780078"></div>
<div style="left:1448px;top:219px;width:1px;height:173px;background:#c4c4c4"></div>
<div style="left:329px;top:279px;width:0;height:0;border-left:4px solid #444;border-top:4px solid transparent;border-bottom:4px solid transparent"></div>
<span class="t g h" style="left:340px;top:224px">Holat</span>
<span class="t g h" style="left:521px;top:224px">Buyurtma<br>raqami</span>
<span class="t g h" style="left:599px;top:224px">Buyurtma<br>sanasi</span>
<span class="t g h" style="left:700px;top:224px">Mijoz</span>
<span class="t g h" style="left:795px;top:224px">TO'LASH<br>UCHUN</span>
<span class="t g h" style="left:883px;top:224px">To'langan</span>
<span class="t g h" style="left:971px;top:224px">Qarz</span>
<span class="t g h" style="left:1058px;top:224px">Xarajatlar.<br>Reja</span>
<span class="t g h" style="left:1145px;top:224px">Daromad. Fakt</span>
<span class="t g h" style="left:1249px;top:224px">Materiallar</span>
<span class="t g h" style="left:1337px;top:224px">Eslatmalar</span>
<span class="t g" style="left:374px;top:276px;color:#ff2c00">04. To'lovni kutish</span>
<span class="t g" style="left:522px;top:276px;color:#ff2c00">5</span>
<span class="t g" style="left:600px;top:276px;color:#ff2c00">16.08.2022</span>
<span class="t g" style="left:700px;top:276px;color:#ff2c00">Mijoz №1</span>
<span class="t g" style="right:608px;top:276px;color:#ff2c00">9 050.00</span>
<span class="t g" style="right:520px;top:276px;color:#ff2c00">5 000.00</span>
<span class="t g" style="right:433px;top:276px;color:#ff2c00">4 050.00</span>
<span class="t g" style="right:345px;top:276px;color:#ff2c00">0.00</span>
<span class="t g" style="right:241px;top:276px;color:#ff2c00">5 000.00</span>
<span class="t g" style="right:154px;top:276px;color:#ff2c00">1 050.00</span>
<span class="t g" style="left:374px;top:312px;color:#10109a;line-height:16px">02. Tijorat taklifi<br>yuborildi</span>
<span class="t g" style="left:522px;top:320px;color:#10109a">6</span>
<span class="t g" style="left:600px;top:320px;color:#10109a">01.09.2022</span>
<span class="t g" style="left:700px;top:320px;color:#10109a">Mijoz №2</span>
<span class="t g" style="right:608px;top:320px;color:#10109a">0.00</span>
<span class="t g" style="right:520px;top:320px;color:#10109a">0.00</span>
<span class="t g" style="right:433px;top:320px;color:#10109a">0.00</span>
<span class="t g" style="right:345px;top:320px;color:#10109a">0.00</span>
<span class="t g" style="right:241px;top:320px;color:#10109a">0.00</span>
<span class="t g" style="right:154px;top:320px;color:#10109a">0.00</span>
<span class="t g" style="left:374px;top:364px;color:#ffffff">07. Ishlab chiqarishda</span>
<span class="t g" style="left:522px;top:364px;color:#ffffff">7</span>
<span class="t g" style="left:600px;top:364px;color:#ffffff">01.09.2022</span>
<span class="t g" style="left:700px;top:364px;color:#ffffff">Mijoz</span>
<span class="t g" style="right:608px;top:364px;color:#ffffff">24 000.00</span>
<span class="t g" style="right:520px;top:364px;color:#ffffff">24 000.00</span>
<span class="t g" style="right:433px;top:364px;color:#ffffff">0.00</span>
<span class="t g" style="right:345px;top:364px;color:#ffffff">750.00</span>
<span class="t g" style="right:241px;top:364px;color:#ffffff">23 250.00</span>
<span class="t g" style="right:154px;top:364px;color:#ffffff">0.00</span>
<div style="left:325px;top:476px;width:1124px;height:44px;background:#f4f4f4;border-top:1px solid #cfcfcf;border-right:1px solid #c9c9c9"></div>
<div style="left:797px;top:479px;width:82px;height:38px;background:#fff;border:1px solid #d2d2d2"></div>
<span class="t g" style="right:615px;top:492px;font-size:13.200px">33 050.00</span>
<div style="left:885px;top:479px;width:82px;height:38px;background:#fff;border:1px solid #d2d2d2"></div>
<span class="t g" style="right:527px;top:492px;font-size:13.200px">29 000.00</span>
<div style="left:972px;top:479px;width:82px;height:38px;background:#fff;border:1px solid #d2d2d2"></div>
<span class="t g" style="right:440px;top:492px;font-size:13.200px">4 050.00</span>
<div style="left:1059px;top:479px;width:82px;height:38px;background:#fff;border:1px solid #d2d2d2"></div>
<span class="t g" style="right:353px;top:492px;font-size:13.200px">750.00</span>
<div style="left:1147px;top:479px;width:98px;height:38px;background:#fff;border:1px solid #d2d2d2"></div>
<span class="t g" style="right:249px;top:492px;font-size:13.200px">28 250.00</span>
<div style="left:1251px;top:479px;width:82px;height:38px;background:#fff;border:1px solid #d2d2d2"></div>
<span class="t g" style="right:161px;top:492px;font-size:13.200px">1 050.00</span>
<div style="left:884px;top:526px;width:20px;height:0px;border-top:1px dotted #9a9a9a"></div>
<div style="left:441px;top:536px;width:201px;height:51px;background:#f5f5f5;border:1px solid #c8c8c8;border-bottom:none;overflow:hidden"></div>
<svg style="left:456px;top:543px" width="31" height="34"><use href="#book"/></svg>
<span class="t tab" style="left:499px;top:552px;letter-spacing:-0.26px">daromad rejasi</span>
<div style="left:643px;top:536px;width:192px;height:51px;background:#f5f5f5;border:1px solid #c8c8c8;border-bottom:none;overflow:hidden"></div>
<svg style="left:659px;top:543px" width="31" height="34"><use href="#book"/></svg>
<span class="t tab" style="left:702px;top:552px;letter-spacing:-0.25px">daromad fakti</span>
<div style="left:836px;top:536px;width:207px;height:51px;background:#f5f5f5;border:1px solid #c8c8c8;border-bottom:none;overflow:hidden"></div>
<svg style="left:852px;top:543px" width="31" height="34"><use href="#book"/></svg>
<span class="t tab" style="left:893.5px;top:552px;letter-spacing:-0.26px">Xarajatlar rejasi</span>
<div style="left:1044px;top:536px;width:183px;height:51px;background:#f5f5f5;border:1px solid #c8c8c8;border-bottom:none;overflow:hidden"></div>
<svg style="left:1059px;top:543px" width="31" height="34"><use href="#book"/></svg>
<span class="t tab" style="left:1102px;top:552px;letter-spacing:0px">Iste'mol fakti</span>
<div style="left:1228px;top:536px;width:138px;height:51px;background:#f5f5f5;border:1px solid #c8c8c8;border-bottom:none;border-right:none;overflow:hidden"></div>
<svg style="left:1243px;top:543px" width="31" height="34"><use href="#book"/></svg>
<span class="t tab" style="left:1285.5px;top:552px;width:79.5px;overflow:hidden;height:28px;letter-spacing:-0.1px;transform-origin:0 0">Buyurtmalar</span>
<div style="left:324px;top:533px;width:118px;height:55px;background:#fff;border-top:2px solid #1e9be8;border-left:1px solid #c8c8c8;border-right:1px solid #c8c8c8"></div>
<svg style="left:341px;top:543px" width="31" height="34"><use href="#book"/></svg>
<span class="t tab" style="left:384px;top:552px;color:#1e9be8;letter-spacing:.35px">Tarix</span>
<div style="left:1378px;top:547px;width:0;height:0;border-top:4.500px solid #444;border-left:4.500px solid transparent;border-right:4.500px solid transparent"></div>
<div style="left:1413px;top:545px;width:0;height:0;border-right:5px solid #c8c8c8;border-top:4px solid transparent;border-bottom:4px solid transparent"></div>
<div style="left:1448px;top:545px;width:0;height:0;border-left:5px solid #3a3a3a;border-top:4px solid transparent;border-bottom:4px solid transparent"></div>
<div style="left:323px;top:586px;width:1144px;height:300px;border:2px solid #d3d3d3;border-left-color:#cdcdcd;border-bottom-color:#c8c8c8"></div>
<div style="left:326px;top:589px;width:1139px;height:294px;border:1px solid #c8c8c8"></div>
<div style="left:325px;top:586px;width:116px;height:2px;background:#fff"></div>
<div style="left:327px;top:590px;width:696px;height:44px;background:#f5f5f5;border-right:1px solid #c6c6c6;border-bottom:1px solid #c6c6c6"></div>
<div style="left:340px;top:590px;width:1px;height:43px;background:#c6c6c6"></div>
<div style="left:547px;top:590px;width:1px;height:43px;background:#c6c6c6"></div>
<div style="left:739px;top:590px;width:1px;height:43px;background:#c6c6c6"></div>
<div style="left:327px;top:634px;width:14px;height:131px;background:#f5f5f5"></div>
<div style="left:340px;top:634px;width:1px;height:131px;background:#c6c6c6"></div>
<div style="left:341px;top:634px;width:681px;height:43px;background:#d9f0ff"></div>
<div style="left:341px;top:677px;width:681px;height:44px;background:#dcf8e3"></div>
<div style="left:341px;top:721px;width:681px;height:44px;background:#d9f0ff"></div>
<div style="left:327px;top:677px;width:696px;height:1px;background:#c4c4c4"></div>
<div style="left:327px;top:721px;width:696px;height:1px;background:#c4c4c4"></div>
<div style="left:327px;top:765px;width:696px;height:1px;background:#c4c4c4"></div>
<div style="left:1022px;top:634px;width:1px;height:132px;background:#c4c4c4"></div>
<div style="left:331px;top:652px;width:0;height:0;border-left:4px solid #444;border-top:4px solid transparent;border-bottom:4px solid transparent"></div>
<span class="t g h" style="left:343px;top:597px">Xodim</span>
<span class="t g h" style="left:549px;top:597px">Sana va vaqt</span>
<span class="t g h" style="left:742px;top:597px">Holat</span>
<span class="t g" style="left:376px;top:649px;">Xodim №1</span>
<span class="t g" style="left:550px;top:649px;letter-spacing:.16px">16.08.2022 18:57:23</span>
<span class="t g" style="left:742px;top:649px;">01. Tijorat taklifini yuboring</span>
<span class="t g" style="left:376px;top:692px;">Xodim №1</span>
<span class="t g" style="left:550px;top:692px;letter-spacing:.16px">01.09.2022 15:32:19</span>
<span class="t g" style="left:742px;top:692px;">03. To'lov uchun hisob-faktura</span>
<span class="t g" style="left:376px;top:736px;">Xodim №1</span>
<span class="t g" style="left:550px;top:736px;letter-spacing:.16px">01.09.2022 15:32:23</span>
<span class="t g" style="left:742px;top:736px;">04. To'lovni kutish</span>
<div style="left:327px;top:843px;width:696px;height:39px;background:#f4f4f4;border:1px solid #cfcfcf;border-left:none"></div>
</div>

<!-- BOTTOM -->
<div id="bottom" class="abs">
<div style="left:22px;top:884px;width:302px;height:2px;background:#c8c8c8"></div>
<div style="left:421px;top:889px;width:1046px;height:1px;background:#d2d2d2"></div>
<div style="left:24px;top:888px;width:214px;height:50px;background:#f3f3f3;border-left:1px solid #c2c2c2;border-bottom:1px solid #c2c2c2"></div>
<svg style="left:39px;top:895px" width="31" height="34"><use href="#book"/></svg>
<span class="t g" style="left:82px;top:906px;color:#5e5e5e;font-size:14px">Axborot tarqatish</span>
<div style="left:203px;top:903px;width:18px;height:18px;background:#fff"></div>
<svg style="left:206px;top:907px" width="12" height="12"><path d="M1.500 1.500l9 9M10.500 1.500l-9 9" stroke="#1e9be8" stroke-width="2" fill="none"/></svg>
<div style="left:238px;top:887px;width:183px;height:54px;background:#fff;border-left:1px solid #cdcdcd;border-right:1px solid #cdcdcd;border-bottom:2px solid #1e9be8"></div>
<svg style="left:254px;top:897px" width="31" height="34"><use href="#book"/></svg>
<span class="t g" style="left:297px;top:907px;color:#1e9be8;font-size:14px;letter-spacing:-.2px">Buyurtmalar</span>
<svg style="left:389px;top:908px" width="12" height="12"><path d="M1.500 1.500l9 9M10.500 1.500l-9 9" stroke="#1e9be8" stroke-width="2" fill="none"/></svg>
<svg style="left:28px;top:944px" width="21" height="21"><circle cx="10.500" cy="10.500" r="9.800" fill="#4b82c3"/><circle cx="10.500" cy="5.800" r="1.700" fill="#fff"/><rect x="9" y="8.800" width="3" height="7.500" rx=".8" fill="#fff"/></svg>
<span class="t g" style="left:70px;top:949px;">7.3.9114.10 Professional</span>
<div style="left:246px;top:946px;width:1px;height:19px;background:#bdbdbd"></div>
<div style="left:417px;top:946px;width:1px;height:19px;background:#bdbdbd"></div>
<div style="left:595px;top:946px;width:1px;height:19px;background:#bdbdbd"></div>
<div style="left:744px;top:946px;width:1px;height:19px;background:#bdbdbd"></div>
<div style="left:893px;top:946px;width:1px;height:19px;background:#bdbdbd"></div>
<div style="left:1435px;top:945px;width:1px;height:19px;background:#c4c4c4"></div>
<span class="t g" style="left:299px;top:949px;">localhost (utf8)</span>
<span class="t g" style="left:469px;top:949px;font-size:13.200px">NIKOLAY (MAIN)</span>
<span class="t g" style="left:649px;top:949px;">21.08.2024</span>
<span class="t g" style="left:780px;top:949px;font-size:13.700px;letter-spacing:.32px">00:00:00:002</span>
<div style="left:1461px;top:950px;width:2px;height:2px;background:#7a7a7a"></div>
<div style="left:1456px;top:955px;width:2px;height:2px;background:#7a7a7a"></div>
<div style="left:1461px;top:955px;width:2px;height:2px;background:#7a7a7a"></div>
<div style="left:1451px;top:960px;width:2px;height:2px;background:#7a7a7a"></div>
<div style="left:1456px;top:960px;width:2px;height:2px;background:#7a7a7a"></div>
<div style="left:1461px;top:960px;width:2px;height:2px;background:#7a7a7a"></div>
</div>
<div id="misc" class="abs">
<svg style="left:345px;top:166px" width="31" height="38" viewBox="0 0 31 38"><rect x=".5" y=".8" width="29.600" height="36.400" fill="#fbfcff" stroke="#a9b0dc"/><rect x="3.500" y="4" width="23.500" height="6" fill="#9fcbee" stroke="#86b4e0" stroke-width=".6"/><path d="M3.500 13.5h23.5" stroke="#b7c3e6" stroke-width="1"/><path d="M3.500 16.5h23.5" stroke="#b7c3e6" stroke-width="1"/><path d="M3.500 19.5h9" stroke="#b7c3e6" stroke-width="1"/><path d="M3.500 22.5h9" stroke="#b7c3e6" stroke-width="1"/><path d="M3.500 25.5h9" stroke="#b7c3e6" stroke-width="1"/><path d="M3.500 28.5h9" stroke="#b7c3e6" stroke-width="1"/><path d="M3.500 31.5h9" stroke="#b7c3e6" stroke-width="1"/><rect x="14" y="19" width="5.500" height="14.500" fill="#6fb0e6" stroke="#4d8fd0" stroke-width=".6"/><rect x="20.500" y="14.500" width="5.500" height="19" fill="#f4a860" stroke="#dc8a3c" stroke-width=".6"/><path d="M3.500 34.500h23.500" stroke="#b7c3e6"/></svg>
<svg style="left:476px;top:167px" width="38" height="38" viewBox="0 0 38 38"><circle cx="19" cy="19.200" r="17.600" fill="url(#gGreen)" stroke="#7aa93a" stroke-width="1.100"/><circle cx="19" cy="19.200" r="16.100" fill="none" stroke="#cfe89a" stroke-width="1" opacity=".7"/><path d="M9.500 15h9.500v-5.800l11.300 10l-11.300 10v-5.800h-9.500z" fill="#fff" stroke="#8fbd4c" stroke-width="1.200" stroke-linejoin="round"/></svg>
<svg style="left:602px;top:166px" width="39" height="39" viewBox="0 0 39 39"><defs><linearGradient id="gClk" x1="0" y1="0" x2="0" y2="1"><stop offset="0" stop-color="#d6534d"/><stop offset="1" stop-color="#ee9f99"/></linearGradient></defs><circle cx="19.200" cy="19.400" r="17.800" fill="url(#gClk)" stroke="#c8504a" stroke-width=".8"/><circle cx="19.200" cy="19.400" r="13.600" fill="#fbfbfb" stroke="#d98680" stroke-width=".8"/><path d="M19.200 19.400l6.500-9.500" stroke="#8d929c" stroke-width="1.600" stroke-linecap="round"/><path d="M19.200 19.400v11.500" stroke="#9aa0aa" stroke-width="1.600" stroke-linecap="round"/><path d="M19.200 19.400h-10.500" stroke="#d9534d" stroke-width="1.400" stroke-linecap="round"/><circle cx="19.200" cy="19.400" r="1.500" fill="#777"/><circle cx="19.20" cy="7.80" r=".6" fill="#9a9a9a"/><circle cx="25.00" cy="9.35" r=".6" fill="#9a9a9a"/><circle cx="29.25" cy="13.60" r=".6" fill="#9a9a9a"/><circle cx="30.80" cy="19.40" r=".6" fill="#9a9a9a"/><circle cx="29.25" cy="25.20" r=".6" fill="#9a9a9a"/><circle cx="25.00" cy="29.45" r=".6" fill="#9a9a9a"/><circle cx="19.20" cy="31.00" r=".6" fill="#9a9a9a"/><circle cx="13.40" cy="29.45" r=".6" fill="#9a9a9a"/><circle cx="9.15" cy="25.20" r=".6" fill="#9a9a9a"/><circle cx="7.60" cy="19.40" r=".6" fill="#9a9a9a"/><circle cx="9.15" cy="13.60" r=".6" fill="#9a9a9a"/><circle cx="13.40" cy="9.35" r=".6" fill="#9a9a9a"/></svg>
<svg style="left:657px;top:178px" width="18" height="18"><circle cx="9" cy="9" r="7.300" fill="#fff" stroke="#c4c4c4" stroke-width="1.200"/><path d="M6.200 6.200l5.300 5.300M12 7.300v4.700h-4.700" fill="none" stroke="#c4c4c4" stroke-width="1.200"/></svg>
<svg style="left:1443px;top:178px" width="18" height="18"><circle cx="9" cy="9" r="7.300" fill="#fff" stroke="#c4c4c4" stroke-width="1.200"/><path d="M6.200 6.200l5.300 5.300M12 7.300v4.700h-4.700" fill="none" stroke="#c4c4c4" stroke-width="1.200"/></svg>
<div style="left:458px;top:184px;width:0;height:0;border-top:4px solid #333;border-left:3.500px solid transparent;border-right:3.500px solid transparent"></div>
<div style="left:574px;top:184px;width:0;height:0;border-top:4px solid #333;border-left:3.500px solid transparent;border-right:3.500px solid transparent"></div>
<svg style="left:28px;top:173px" width="19" height="15" viewBox="0 0 19 15"><path d="M.5 2.500a1.500 1.500 0 0 1 1.500-1.500h5.500l2 2.500h-9z" fill="#8c8c8c"/><path d="M.5 3.500h16.500a1.300 1.300 0 0 1 1.300 1.300v8.400a1.300 1.300 0 0 1-1.300 1.300h-15.200a1.300 1.300 0 0 1-1.300-1.300z" fill="#fdbb50"/></svg>
<svg style="left:256px;top:175px" width="13" height="11"><rect x="3.500" y="1" width="9" height="6" fill="none" stroke="#7d7d7d"/><rect x="3.500" y=".5" width="9" height="2" fill="#7d7d7d"/><rect x=".5" y="4.500" width="9" height="6" fill="#fff" stroke="#7d7d7d"/><rect x=".5" y="4" width="9" height="2" fill="#7d7d7d"/></svg>
<svg style="left:295px;top:176px" width="9" height="11"><path d="M2 .5h5v5h1.500v1h-3.500v4h-1v-4h-3.500v-1h1.500z" fill="#7d7d7d"/><rect x="3" y="1.500" width="1.200" height="4" fill="#ddd"/></svg>
<svg style="left:29px;top:849px" width="20" height="20" viewBox="0 0 20 20"><path d="M1 19c0-5 3-7.500 9-7.500s9 2.500 9 7.500c0 .8-18 .8-18 0z" fill="url(#gBodyG)" stroke="#6f9a3c" stroke-width=".6"/><ellipse cx="10" cy="7.500" rx="4.300" ry="5.300" fill="url(#gSkin)" stroke="#c99a66" stroke-width=".5"/><path d="M5.200 7.500c-1.200-6.500 2-7 4.800-7s6 .5 4.800 7c-.4-3-1.800-4.200-4.800-4.200s-4.400 1.200-4.800 4.200z" fill="#b0733f"/></svg>
<div style="left:257px;top:856px;width:12px;height:9px;border:1px solid #7d7d7d;border-top-width:2px"></div>
<svg style="left:295px;top:855px" width="9" height="11"><path d="M2 .5h5v5h1.500v1h-3.500v4h-1v-4h-3.500v-1h1.500z" fill="#7d7d7d"/><rect x="3" y="1.500" width="1.200" height="4" fill="#ddd"/></svg>
<svg style="left:288px;top:809px" width="18" height="17" viewBox="0 0 18 17"><circle cx="7" cy="6.800" r="5" fill="#fff" stroke="#1f5fc4" stroke-width="2.200"/><path d="M10.800 10.600l5.200 5" stroke="#1f5fc4" stroke-width="3" stroke-linecap="round"/></svg>
<svg style="left:260px;top:944px" width="18" height="20" viewBox="0 0 18 20"><defs><linearGradient id="gDb" x1="0" y1="0" x2="1" y2="0"><stop offset="0" stop-color="#e89a3c"/><stop offset=".4" stop-color="#fde2ad"/><stop offset="1" stop-color="#e08a30"/></linearGradient></defs><path d="M2 13.2v4.200c0 1.400 3.100 2.400 7 2.400s7-1 7-2.400v-4.200z" fill="url(#gDb)" stroke="#c87c2c" stroke-width=".7"/><ellipse cx="9" cy="13.2" rx="7" ry="2.300" fill="#fbd89c" stroke="#c87c2c" stroke-width=".7"/><path d="M2 8.2v4.200c0 1.400 3.100 2.400 7 2.400s7-1 7-2.400v-4.200z" fill="url(#gDb)" stroke="#c87c2c" stroke-width=".7"/><ellipse cx="9" cy="8.2" rx="7" ry="2.300" fill="#fbd89c" stroke="#c87c2c" stroke-width=".7"/><path d="M2 3.2v4.200c0 1.400 3.100 2.400 7 2.400s7-1 7-2.400v-4.200z" fill="url(#gDb)" stroke="#c87c2c" stroke-width=".7"/><ellipse cx="9" cy="3.2" rx="7" ry="2.300" fill="#fbd89c" stroke="#c87c2c" stroke-width=".7"/></svg>
<svg style="left:429px;top:944px" width="20" height="20" viewBox="0 0 20 20"><path d="M1 19c0-5 3-7.500 9-7.500s9 2.500 9 7.500c0 .8-18 .8-18 0z" fill="url(#gBodyG)" stroke="#6f9a3c" stroke-width=".6"/><ellipse cx="10" cy="7.500" rx="4.300" ry="5.300" fill="url(#gSkin)" stroke="#c99a66" stroke-width=".5"/><path d="M5.200 7.500c-1.200-6.500 2-7 4.800-7s6 .5 4.800 7c-.4-3-1.800-4.200-4.800-4.200s-4.400 1.200-4.800 4.200z" fill="#b0733f"/></svg>
<svg style="left:608px;top:945px" width="20" height="19" viewBox="0 0 20 19"><rect x="1" y="1" width="17.500" height="17" fill="#fff" stroke="#6b74a8"/><rect x="1" y="1" width="17.500" height="4" fill="#d9534d"/><text x="9.800" y="15.500" text-anchor="middle" font-family="Liberation Serif,DejaVu Serif,serif" font-size="11" font-weight="bold" fill="#3b4a86">31</text></svg>
</div>
</body>
</html>
